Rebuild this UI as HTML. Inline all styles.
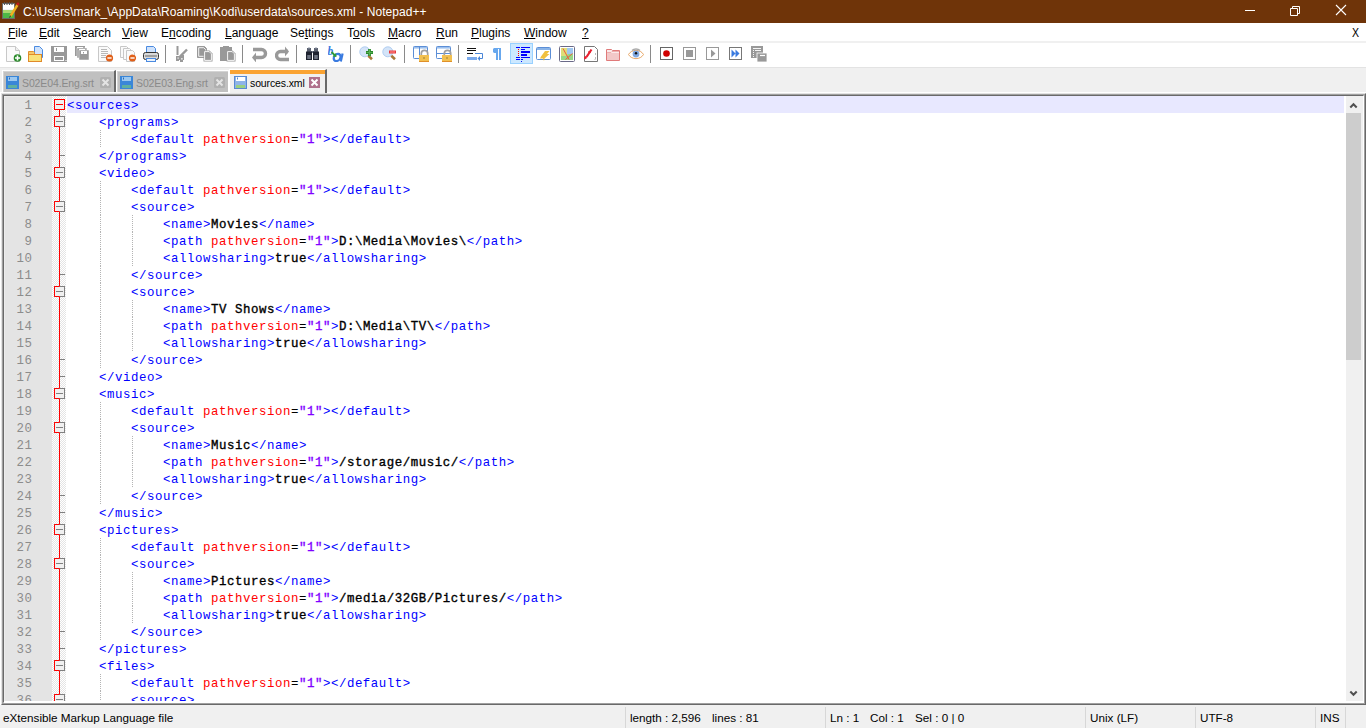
<!DOCTYPE html>
<html><head><meta charset="utf-8">
<style>
*{margin:0;padding:0;box-sizing:border-box}
html,body{width:1366px;height:728px;overflow:hidden;background:#f0f0f0;font-family:"Liberation Sans",sans-serif;position:relative}
.abs{position:absolute}
#title{left:0;top:0;width:1366px;height:23px;background:#6f3409;color:#fff;font-size:12px}
#title .t{position:absolute;left:23px;top:5px;white-space:pre;letter-spacing:0.06px}
#menu{left:0;top:23px;width:1366px;height:18px;background:#fff;font-size:12px;color:#000}
#menu span{position:absolute;top:3px;white-space:pre}
#menu u{text-decoration:underline;text-underline-offset:1px;text-decoration-thickness:1px}
#sep1{left:0;top:41px;width:1366px;height:2px;background:#f0f0f0}
#tool{left:0;top:43px;width:1366px;height:24px;background:#fff}
#tool svg{position:absolute;top:3px}
.ts{position:absolute;top:2px;width:1px;height:18px;background:#8a8a8a}
#tline{left:0;top:67px;width:1366px;height:1px;background:#e3e3e3}
.tabbg{position:absolute}
.tabt{position:absolute;font-size:10.5px;white-space:pre;line-height:12px;letter-spacing:-0.12px}
#tabwhite{position:absolute;left:0;top:92px;width:1366px;height:1px;background:#fff}
#lnm{position:absolute;left:4px;top:96px;width:48px;height:607px;background:#e4e4e4;box-shadow:inset 1px 1px 0 #ececec}
#fm{position:absolute;left:52px;top:96px;width:14px;height:607px;background-color:#fff;
 background-image:linear-gradient(45deg,#e4e4e4 25%,transparent 25%,transparent 75%,#e4e4e4 75%),linear-gradient(45deg,#e4e4e4 25%,transparent 25%,transparent 75%,#e4e4e4 75%);
 background-size:2px 2px;background-position:0 0,1px 1px}
#cl{position:absolute;left:67px;top:96px;width:1277px;height:17px;background:#e8e8ff}
#code{position:absolute;left:67px;top:98px;font-family:"Liberation Mono",monospace;font-size:12.4px;letter-spacing:0.56px;line-height:17px;white-space:pre;color:#000}
#nums{position:absolute;left:4px;top:98px;width:28.6px;font-family:"Liberation Mono",monospace;font-size:12.4px;letter-spacing:0.56px;line-height:17px;text-align:right;color:#8c8c8c}
.l,.n{height:17px}
b{font-weight:normal}
b.t{color:#0000ff}
b.a{color:#ff0000}
b.v{color:#8000ff;font-weight:normal;-webkit-text-stroke:0.35px #8000ff}
b.x{color:#000;font-weight:normal;-webkit-text-stroke:0.35px #000}
#clip{position:absolute;left:4px;top:96px;width:1359px;height:605px;overflow:hidden}
#clipin{position:absolute;left:-4px;top:-96px;width:1366px;height:728px}
#sb{position:absolute;left:1346px;top:96px;width:17px;height:606px;background:#f0f0f0}
#thumb{position:absolute;left:1346px;top:113px;width:15px;height:247px;background:#cdcdcd}
#status{left:0;top:705px;width:1366px;height:23px;background:#f0f0f0;font-size:11.7px;color:#000}
#status span{position:absolute;top:6px;white-space:pre}
.ss{position:absolute;top:2px;width:1px;height:21px;background:#d7d7d7}
</style></head><body>
<div id="title" class="abs">
<svg class="abs" style="left:1px;top:1px" width="19" height="19" viewBox="0 0 19 19">
<rect x="1.5" y="2.5" width="12" height="15" fill="#f4f4f4" stroke="#6a6a6a"/>
<path d="M3.5 1v3M6 1v3M8.5 1v3M11 1v3" stroke="#555" stroke-width="1"/>
<rect x="2" y="4" width="11" height="4" fill="#fff"/>
<rect x="2" y="9" width="11" height="8" fill="#4cb848"/>
<rect x="2" y="9" width="11" height="3" fill="#a8d870"/>
<path d="M9.5 15 L16.5 4" stroke="#f0b020" stroke-width="2.4"/>
<path d="M8.6 16.6 L9.6 14.6" stroke="#333" stroke-width="1"/>
<circle cx="17" cy="3" r="1.4" fill="#c01818"/>
</svg>
<span class="t">C:\Users\mark_\AppData\Roaming\Kodi\userdata\sources.xml - Notepad++</span>
<svg class="abs" style="left:1245px;top:10px" width="11" height="2"><rect width="10" height="1" fill="#fff"/></svg>
<svg class="abs" style="left:1288px;top:4px" width="12" height="12"><path d="M2.5 4.5h7v7h-7z M4.5 4.5v-2h7v7h-2" fill="none" stroke="#fff"/></svg>
<svg class="abs" style="left:1335px;top:4px" width="12" height="12"><path d="M1 1L11 11M11 1L1 11" stroke="#fff" stroke-width="1.1"/></svg>
</div>
<div id="menu" class="abs">
<span style="left:8px"><u>F</u>ile</span>
<span style="left:39px"><u>E</u>dit</span>
<span style="left:73px"><u>S</u>earch</span>
<span style="left:122px"><u>V</u>iew</span>
<span style="left:161px">E<u>n</u>coding</span>
<span style="left:225px"><u>L</u>anguage</span>
<span style="left:290px">Se<u>t</u>tings</span>
<span style="left:347px">T<u>o</u>ols</span>
<span style="left:388px"><u>M</u>acro</span>
<span style="left:436px"><u>R</u>un</span>
<span style="left:471px"><u>P</u>lugins</span>
<span style="left:524px"><u>W</u>indow</span>
<span style="left:582px"><u>?</u></span>
<span style="left:1352px;color:#000;transform:scaleX(0.88);transform-origin:0 0">X</span>
</div>
<div id="sep1" class="abs"></div>
<div id="tool" class="abs">
<svg style="left:6px" width="16" height="16" viewBox="0 0 16 16"><path d="M0.5 0.5h9l4 4v11h-13z" fill="#fafafa" stroke="#c8c8c8"/>
<path d="M9.5 0.5v4h4" fill="#eee" stroke="#c8c8c8"/>
<circle cx="11.5" cy="12" r="3.8" fill="#2a8a2a"/>
<path d="M11.5 9.5v5M9 12h5" stroke="#fff" stroke-width="1.6"/></svg>
<svg style="left:28px" width="16" height="16" viewBox="0 0 16 16"><path d="M6.5 0.5h5l3 3v8h-8z" fill="#cfe2fb" stroke="#4a8ae0"/>
<path d="M0.5 5.5h5l1 1h0v9h-6z" fill="#f5c86a" stroke="#e09030"/>
<rect x="0.5" y="8.5" width="13" height="7" fill="#f9e27a" stroke="#e08a2a"/></svg>
<svg style="left:51px" width="16" height="16" viewBox="0 0 16 16"><path d="M0 0h16v16h-16z" fill="#999"/>
<rect x="3" y="1" width="10" height="5" fill="#fff"/>
<rect x="5" y="2" width="1" height="3" fill="#999"/>
<rect x="3" y="10" width="10" height="5" fill="#fff"/>
<rect x="4" y="11" width="8" height="3" fill="#999"/>
<rect x="14.5" y="14" width="1" height="1" fill="#fff"/></svg>
<svg style="left:75px" width="16" height="16" viewBox="0 0 16 16"><rect x="0" y="0" width="10" height="10" fill="#999"/>
<rect x="2" y="1" width="6" height="2" fill="#fff"/>
<rect x="2" y="2" width="10" height="10" fill="#999" stroke="#fff" stroke-width="0.5"/>
<rect x="4" y="3" width="6" height="2" fill="#fff"/>
<rect x="4" y="4" width="10" height="10" fill="#999" stroke="#fff" stroke-width="0.5"/>
<rect x="6" y="5" width="6" height="3" fill="#fff"/>
<rect x="8" y="6" width="1" height="1.5" fill="#999"/></svg>
<svg style="left:98px" width="16" height="16" viewBox="0 0 16 16"><path d="M0.5 0.5h9l4 4v11h-13z" fill="#fafafa" stroke="#c8c8c8"/>
<path d="M3 3.5h6M3 5.5h7M3 7.5h7M3 9.5h5M3 11.5h5" stroke="#b8b8b8" stroke-width="1"/>
<circle cx="11.5" cy="12" r="3.6" fill="#e0601a"/>
<path d="M9.4 12h4.2" stroke="#fff" stroke-width="1.4"/></svg>
<svg style="left:120px" width="16" height="16" viewBox="0 0 16 16"><path d="M0.5 0.5h6l2 2v9h-8z" fill="#fafafa" stroke="#c8c8c8"/>
<path d="M3.5 2.5h6l2 2v9h-8z" fill="#fafafa" stroke="#c8c8c8"/>
<path d="M6.5 4.5h6l2 2v9h-8z" fill="#fafafa" stroke="#c8c8c8"/>
<circle cx="12.5" cy="12" r="3.6" fill="#e0601a"/>
<path d="M10.4 12h4.2" stroke="#fff" stroke-width="1.4"/></svg>
<svg style="left:143px" width="16" height="16" viewBox="0 0 16 16"><path d="M3.5 0.5h7l2 2v5h-9z" fill="#cfe2fb" stroke="#4a8ae0"/>
<rect x="0.5" y="6.5" width="15" height="7" rx="2" fill="#d9d9d9" stroke="#333"/>
<rect x="2" y="9" width="12" height="2" fill="#a0a0a0"/>
<rect x="3.5" y="12.5" width="9" height="3" fill="#eaf2fc" stroke="#4a8ae0"/></svg>
<svg style="left:176px" width="13" height="16" viewBox="0 0 13 16"><path d="M1.5 0v9" stroke="#999" stroke-width="2"/>
<path d="M11 3.5L4 10.5" stroke="#999" stroke-width="2.4"/>
<path d="M0 10h4v4h-1v1h-3z" fill="#999"/>
<path d="M4 9h4v5h-1v2h-3z" fill="#999"/>
<rect x="1.5" y="11.5" width="1.2" height="1.2" fill="#fff"/>
<rect x="5.3" y="12" width="1.2" height="1.6" fill="#fff"/></svg>
<svg style="left:197px" width="16" height="16" viewBox="0 0 16 16"><path d="M0.5 0.5h7l2 2v9h-9z" fill="#999" stroke="#999"/>
<path d="M1.7 1.7h5l2 2v6.6h-7z" fill="#999" stroke="#fff" stroke-width="0.9"/>
<path d="M6.5 4.5h6l3 3v8h-9z" fill="#999"/>
<path d="M7.6 5.6h4.6l2.2 2.2v6.6h-6.8z" fill="#999" stroke="#fff" stroke-width="0.9"/></svg>
<svg style="left:220px" width="16" height="16" viewBox="0 0 16 16"><path d="M0 1h3v-1h6v1h3v14h-12z" fill="#999"/>
<path d="M6.5 4.5h6l3 3v8h-9z" fill="#999"/>
<path d="M7.6 5.6h4.6l2.2 2.2v6.6h-6.8z" fill="#999" stroke="#fff" stroke-width="0.9"/></svg>
<svg style="left:252px" width="16" height="16" viewBox="0 0 16 16"><path d="M1 3.5h8.5a4 4 0 0 1 0 8h-6" fill="none" stroke="#999" stroke-width="3.4"/>
<path d="M0 11.5l4-5v10z" fill="#999"/></svg>
<svg style="left:275px" width="16" height="16" viewBox="0 0 16 16"><path d="M13 5.5h-7.5a4 4 0 0 0 0 8h8.5" fill="none" stroke="#999" stroke-width="3.4"/>
<path d="M14 5.5l-4-5v10z" fill="#999"/></svg>
<svg style="left:306px" width="16" height="16" viewBox="0 0 16 16"><rect x="1" y="2" width="4" height="4" fill="#5a6070"/>
<rect x="8" y="2" width="4" height="4" fill="#5a6070"/>
<rect x="2" y="1.5" width="2" height="1" fill="#9098a8"/>
<rect x="9" y="1.5" width="2" height="1" fill="#9098a8"/>
<rect x="4" y="5" width="5" height="2" fill="#707888"/>
<rect x="0" y="5.5" width="6" height="8.5" fill="#1e2230"/>
<rect x="7" y="5.5" width="6" height="8.5" fill="#1e2230"/>
<rect x="1.5" y="9" width="3" height="4" fill="#9aa0ae"/>
<rect x="8.5" y="9" width="3" height="4" fill="#9aa0ae"/>
<rect x="2.5" y="9" width="1" height="4" fill="#404858"/>
<rect x="9.5" y="9" width="1" height="4" fill="#404858"/></svg>
<svg style="left:328px" width="16" height="16" viewBox="0 0 16 16"><text x="-0.5" y="8.5" font-family="Liberation Serif" font-style="italic" font-weight="bold" font-size="11.5" fill="#3a7be0">b</text>
<ellipse cx="9.3" cy="11.5" rx="3.3" ry="3.6" fill="none" stroke="#3a7be0" stroke-width="2.2" transform="skewX(-12) translate(2.3 0)"/>
<path d="M14.6 7.5l-1.8 8" stroke="#3a7be0" stroke-width="2.2"/>
<path d="M3.5 6l3.5 3.5" stroke="#2e9a3a" stroke-width="1.8"/>
<path d="M8.5 11l-4-0.5 3.5-3.5z" fill="#2e9a3a"/></svg>
<svg style="left:359px" width="16" height="16" viewBox="0 0 16 16"><circle cx="5.8" cy="5.8" r="5" fill="#d4e4f8" stroke="#b0cdf0"/>
<path d="M9.3 9.8l3.7 3.4" stroke="#a87838" stroke-width="2.6"/>
<path d="M10.5 3v7M7 6.5h7" stroke="#2a8a2a" stroke-width="2.8"/>
<path d="M10.5 3.5v6M7.5 6.5h6" stroke="#58b058" stroke-width="1.2"/></svg>
<svg style="left:382px" width="16" height="16" viewBox="0 0 16 16"><circle cx="5.8" cy="5.8" r="5" fill="#d4e4f8" stroke="#b0cdf0"/>
<path d="M9.3 9.8l3.7 3.4" stroke="#a87838" stroke-width="2.6"/>
<rect x="7" y="4.5" width="7" height="3" fill="#e83838"/>
<rect x="8" y="5.5" width="5" height="1" fill="#ff9090"/></svg>
<svg style="left:413px" width="16" height="16" viewBox="0 0 16 16"><rect x="0.5" y="0.5" width="14" height="12" rx="0.8" fill="#fff" stroke="#5b8ed6"/>
<rect x="1" y="1" width="13" height="1.6" fill="#9cc0ee"/>
<path d="M6.5 1v12" stroke="#5b8ed6"/>
<path d="M8.3 9.5v-2a3.2 3.2 0 0 1 6.4 0v2" fill="none" stroke="#a0a0a0" stroke-width="1.7"/>
<rect x="6" y="9" width="10" height="7" fill="#f2c050"/>
<rect x="6" y="15" width="10" height="1" fill="#e0902a"/>
<rect x="10" y="11" width="2" height="2" fill="#c8a040"/></svg>
<svg style="left:436px" width="16" height="16" viewBox="0 0 16 16"><rect x="0.5" y="0.5" width="14" height="12" rx="0.8" fill="#fff" stroke="#5b8ed6"/>
<rect x="1" y="1" width="13" height="1.6" fill="#9cc0ee"/>
<path d="M1 7.5h13" stroke="#5b8ed6"/>
<path d="M8.3 9.5v-2a3.2 3.2 0 0 1 6.4 0v2" fill="none" stroke="#a0a0a0" stroke-width="1.7"/>
<rect x="6" y="9" width="10" height="7" fill="#f2c050"/>
<rect x="6" y="15" width="10" height="1" fill="#e0902a"/>
<rect x="10" y="11" width="2" height="2" fill="#c8a040"/></svg>
<svg style="left:467px" width="16" height="16" viewBox="0 0 16 16"><path d="M0 2.5h9M0 4.5h9M0 7.5h6" stroke="#111" stroke-width="1"/>
<path d="M8 7.5h7.5v5h-3" fill="none" stroke="#4a86d8" stroke-width="1"/>
<path d="M10.5 12.5l2.5-2.5v5z" fill="#4a86d8"/>
<rect x="0" y="11" width="10" height="3" fill="#7aaaec"/></svg>
<svg style="left:492px" width="10" height="16" viewBox="0 0 10 16"><path d="M2 2h7v12h-2v-11h-1v11h-2v-7h-2l-1-1v-3z" fill="#68a8ee"/></svg>
<svg style="left:536px" width="16" height="16" viewBox="0 0 16 16"><rect x="0.5" y="1.5" width="14" height="12" rx="1" fill="#fff" stroke="#5b8ed6"/>
<rect x="1" y="2" width="13" height="2" fill="#8ab4e8"/>
<path d="M5 10.5l4-5.5h4.5l-2.5 3h2.5l-5 4.5 -0.5 2.5 -1-2.5h-3z" fill="#f0c040"/></svg>
<svg style="left:559px" width="16" height="16" viewBox="0 0 16 16"><rect x="0.5" y="0.5" width="15" height="15" rx="1" fill="#fff" stroke="#6a6a88"/>
<path d="M2 2h12v12h-12z" fill="#dede78"/>
<path d="M8 2h6v6h-6z" fill="#a0c8f0"/>
<path d="M2 10h5l2 -2h5v6h-12z" fill="#98d888"/>
<path d="M4 2.5l6 11M6.5 13.5l7-6" stroke="#f05a3a" stroke-width="1"/></svg>
<svg style="left:584px" width="16" height="16" viewBox="0 0 16 16"><path d="M0.5 0.5h10l3 3v12h-13z" fill="#fff" stroke="#777"/>
<path d="M7.5 3.5l-5 7.5" stroke="#e82030" stroke-width="2.2"/>
<path d="M0 12.5l2.5-1.5" stroke="#e82030" stroke-width="2.6"/>
<path d="M4 6h3" stroke="#e82030" stroke-width="1.2"/>
<path d="M11.5 7v2M11.5 11v2M10.5 13.5h1" stroke="#aaa" stroke-width="0.8"/></svg>
<svg style="left:606px" width="16" height="16" viewBox="0 0 16 16"><path d="M0.5 3.5h5l1 1h7v10h-13z" fill="#fbeaea" stroke="#e07a7a"/>
<path d="M1 7h12v7h-12z" fill="#f2c8c8"/>
<path d="M1 6.5h4l1-1h7" fill="none" stroke="#e8a0a0" stroke-width="0.8"/></svg>
<svg style="left:628px" width="16" height="16" viewBox="0 0 16 16"><path d="M0.5 8.5c3-5.5 12-5.5 15 0c-3 5.5-12 5.5-15 0z" fill="#fff" stroke="#e8a868"/>
<path d="M4 4.5c2-2 6-2 8 0" fill="none" stroke="#aaa" stroke-width="1.4"/>
<circle cx="8" cy="8" r="3.4" fill="#80a8e0"/>
<circle cx="8" cy="7.2" r="1.2" fill="#111"/></svg>
<svg style="left:660px" width="13" height="16" viewBox="0 0 13 16"><rect x="0.5" y="1.5" width="12" height="12" fill="#fff" stroke="#666"/>
<circle cx="6.5" cy="7.5" r="3.3" fill="#d00000"/></svg>
<svg style="left:683px" width="13" height="16" viewBox="0 0 13 16"><rect x="0.5" y="1.5" width="12" height="12" fill="#fff" stroke="#999"/>
<rect x="3" y="4" width="7" height="7" fill="#999"/></svg>
<svg style="left:706px" width="13" height="16" viewBox="0 0 13 16"><rect x="0.5" y="1.5" width="12" height="12" fill="#fff" stroke="#999"/>
<path d="M5 3.5l4.5 4-4.5 4z" fill="#999"/></svg>
<svg style="left:729px" width="13" height="16" viewBox="0 0 13 16"><rect x="0.5" y="1.5" width="12" height="12" fill="#fff" stroke="#777"/>
<path d="M2.5 3.5l4 4-4 4zM6.5 3.5l4 4-4 4z" fill="#3a7be0"/></svg>
<svg style="left:751px" width="16" height="16" viewBox="0 0 16 16"><rect x="0" y="0" width="12" height="12" fill="#999"/>
<path d="M2 2.5h8M2 4.5h1M4 4.5h6M2 6.5h1M2 8.5h1M2 10.5h1" stroke="#fff" stroke-width="0.9"/>
<rect x="6" y="7" width="10" height="9" fill="#999" stroke="#fff" stroke-width="0.8"/>
<path d="M9 9.5h5" stroke="#fff" stroke-width="1.2"/></svg>
<div class="ts" style="left:165px"></div>
<div class="ts" style="left:242px"></div>
<div class="ts" style="left:296px"></div>
<div class="ts" style="left:350px"></div>
<div class="ts" style="left:404px"></div>
<div class="ts" style="left:458px"></div>
<div class="ts" style="left:650px"></div>
<div style="position:absolute;left:510px;top:0px;width:23px;height:21px;background:#cce8ff;border:1px solid #99d1ff"></div>
<svg style="left:516px" width="16" height="16" viewBox="0 0 16 16">
<path d="M0 1.5h4M5 1.5h9M5 3.5h4M0 11.5h4M5 11.5h9M0 13.5h4M5 13.5h2" stroke="#0000ff" stroke-width="1.2"/>
<path d="M5 6h9M5 9h6" stroke="#0000ff" stroke-width="2"/>
<rect x="5" y="15" width="1" height="1" fill="#0000ff"/>
<rect x="2" y="3" width="1" height="1" fill="#ff0000"/><rect x="2" y="5" width="1" height="1" fill="#ff0000"/><rect x="2" y="7" width="1" height="1" fill="#ff0000"/><rect x="2" y="9" width="1" height="1" fill="#ff0000"/>
</svg>
</div>
<div id="tline" class="abs"></div>
<div id="tabwhite"></div>
<div style="position:absolute;left:0;top:92px;width:1px;height:613px;background:#fff"></div>
<div class="tabbg" style="left:2px;top:70px;width:114px;height:22px;background:#c0c0c0;border-style:solid;border-color:#fff #696969 #c0c0c0 #fff;border-width:1px 2px 0 1px;box-shadow:inset 1px 1px 0 #d4d4d4"></div>
<div class="tabbg" style="left:116px;top:70px;width:113px;height:22px;background:#c0c0c0;border-style:solid;border-color:#fff #fff #c0c0c0 #fff;border-width:1px 1px 0 1px;box-shadow:inset 1px 1px 0 #d4d4d4"></div>
<div class="tabbg" style="left:229px;top:69px;width:98px;height:24px;background:#f0f0f0;border-style:solid;border-color:#fff #696969 #f0f0f0 #fff;border-width:1px 2px 0 1px"></div>
<div class="tabbg" style="left:230px;top:70px;width:95px;height:4px;background:#faa332"></div>
<svg class="abs" style="left:6px;top:76px" width="13" height="13"><rect x="0" y="0" width="13" height="13" fill="#3a86d8"/><rect x="2" y="1" width="9" height="4" fill="#9cc8f0"/><rect x="3" y="1.5" width="1" height="2" fill="#2a6ab8"/><rect x="2" y="9" width="9" height="3" fill="#5fb0a0"/></svg><span class="tabt" style="left:22px;top:77px;color:#8a8a8a">S02E04.Eng.srt</span>
<svg class="abs" style="left:100px;top:77px" width="11" height="11"><rect width="11" height="11" rx="1.5" fill="#b0b0b0"/><path d="M2.5 2.5L8.5 8.5M8.5 2.5L2.5 8.5" stroke="#e4e4e4" stroke-width="2"/></svg>
<svg class="abs" style="left:120px;top:76px" width="13" height="13"><rect x="0" y="0" width="13" height="13" fill="#3a86d8"/><rect x="2" y="1" width="9" height="4" fill="#9cc8f0"/><rect x="3" y="1.5" width="1" height="2" fill="#2a6ab8"/><rect x="2" y="9" width="9" height="3" fill="#5fb0a0"/></svg><span class="tabt" style="left:136px;top:77px;color:#8a8a8a">S02E03.Eng.srt</span>
<svg class="abs" style="left:214px;top:77px" width="11" height="11"><rect width="11" height="11" rx="1.5" fill="#b0b0b0"/><path d="M2.5 2.5L8.5 8.5M8.5 2.5L2.5 8.5" stroke="#e4e4e4" stroke-width="2"/></svg>
<svg class="abs" style="left:234px;top:76px" width="13" height="13"><rect x="0.5" y="0.5" width="12" height="12" fill="#8fb4e8" stroke="#5a8ad0"/><rect x="2" y="1" width="9" height="4" fill="#fff"/><rect x="3" y="1.5" width="1" height="2" fill="#5a8ad0"/><rect x="2" y="9" width="9" height="3" fill="#9ad080"/></svg><span class="tabt" style="left:250px;top:77px;color:#000">sources.xml</span>
<svg class="abs" style="left:309px;top:77px" width="11" height="11"><rect width="11" height="11" fill="#b0708c"/><path d="M2.5 2.5L8.5 8.5M8.5 2.5L2.5 8.5" stroke="#fff" stroke-width="2"/></svg>
<div style="position:absolute;left:1px;top:93px;width:1365px;height:612px;border-style:solid;border-width:1px;border-color:#e3e3e3 #696969 #696969 #e3e3e3">
<div style="width:100%;height:100%;border:1px solid #a0a0a0">
<div style="width:100%;height:100%;border-style:solid;border-width:1px;border-color:#696969 #fff #fff #696969;background:#fff"></div></div></div>
<div id="clip"><div id="clipin">
<div id="lnm"></div>
<div id="fm"></div>
<div id="cl"></div>
<div id="nums"><div class=n>1</div><div class=n>2</div><div class=n>3</div><div class=n>4</div><div class=n>5</div><div class=n>6</div><div class=n>7</div><div class=n>8</div><div class=n>9</div><div class=n>10</div><div class=n>11</div><div class=n>12</div><div class=n>13</div><div class=n>14</div><div class=n>15</div><div class=n>16</div><div class=n>17</div><div class=n>18</div><div class=n>19</div><div class=n>20</div><div class=n>21</div><div class=n>22</div><div class=n>23</div><div class=n>24</div><div class=n>25</div><div class=n>26</div><div class=n>27</div><div class=n>28</div><div class=n>29</div><div class=n>30</div><div class=n>31</div><div class=n>32</div><div class=n>33</div><div class=n>34</div><div class=n>35</div><div class=n>36</div></div>
<svg class=guides width="1366" height="728" style="position:absolute;left:0;top:0"><g stroke="#b4b4b4" stroke-width="1" stroke-dasharray="1 1"><line x1="100.5" y1="130" x2="100.5" y2="147"/><line x1="100.5" y1="181" x2="100.5" y2="198"/><line x1="100.5" y1="198" x2="100.5" y2="215"/><line x1="100.5" y1="215" x2="100.5" y2="232"/><line x1="132.5" y1="215" x2="132.5" y2="232"/><line x1="100.5" y1="232" x2="100.5" y2="249"/><line x1="132.5" y1="232" x2="132.5" y2="249"/><line x1="100.5" y1="249" x2="100.5" y2="266"/><line x1="132.5" y1="249" x2="132.5" y2="266"/><line x1="100.5" y1="266" x2="100.5" y2="283"/><line x1="100.5" y1="283" x2="100.5" y2="300"/><line x1="100.5" y1="300" x2="100.5" y2="317"/><line x1="132.5" y1="300" x2="132.5" y2="317"/><line x1="100.5" y1="317" x2="100.5" y2="334"/><line x1="132.5" y1="317" x2="132.5" y2="334"/><line x1="100.5" y1="334" x2="100.5" y2="351"/><line x1="132.5" y1="334" x2="132.5" y2="351"/><line x1="100.5" y1="351" x2="100.5" y2="368"/><line x1="100.5" y1="402" x2="100.5" y2="419"/><line x1="100.5" y1="419" x2="100.5" y2="436"/><line x1="100.5" y1="436" x2="100.5" y2="453"/><line x1="132.5" y1="436" x2="132.5" y2="453"/><line x1="100.5" y1="453" x2="100.5" y2="470"/><line x1="132.5" y1="453" x2="132.5" y2="470"/><line x1="100.5" y1="470" x2="100.5" y2="487"/><line x1="132.5" y1="470" x2="132.5" y2="487"/><line x1="100.5" y1="487" x2="100.5" y2="504"/><line x1="100.5" y1="538" x2="100.5" y2="555"/><line x1="100.5" y1="555" x2="100.5" y2="572"/><line x1="100.5" y1="572" x2="100.5" y2="589"/><line x1="132.5" y1="572" x2="132.5" y2="589"/><line x1="100.5" y1="589" x2="100.5" y2="606"/><line x1="132.5" y1="589" x2="132.5" y2="606"/><line x1="100.5" y1="606" x2="100.5" y2="623"/><line x1="132.5" y1="606" x2="132.5" y2="623"/><line x1="100.5" y1="623" x2="100.5" y2="640"/><line x1="100.5" y1="674" x2="100.5" y2="691"/><line x1="100.5" y1="691" x2="100.5" y2="708"/></g></svg>
<svg width="1366" height="728" style="position:absolute;left:0;top:0"><line x1="59.5" y1="110" x2="59.5" y2="705" stroke="#ff0000"/><rect x="54.5" y="99.5" width="10" height="10" fill="#f0f0f0" stroke="#ff0000"/><line x1="56" y1="104.5" x2="63" y2="104.5" stroke="#ff0000"/><rect x="54.5" y="116.5" width="10" height="10" fill="#f0f0f0" stroke="#808080"/><path d="M59.5 116.5 H54.5 V126.5 H59.5" fill="none" stroke="#ff0000"/><line x1="56" y1="121.5" x2="63" y2="121.5" stroke="#808080"/><rect x="54.5" y="167.5" width="10" height="10" fill="#f0f0f0" stroke="#808080"/><path d="M59.5 167.5 H54.5 V177.5 H59.5" fill="none" stroke="#ff0000"/><line x1="56" y1="172.5" x2="63" y2="172.5" stroke="#808080"/><rect x="54.5" y="201.5" width="10" height="10" fill="#f0f0f0" stroke="#808080"/><path d="M59.5 201.5 H54.5 V211.5 H59.5" fill="none" stroke="#ff0000"/><line x1="56" y1="206.5" x2="63" y2="206.5" stroke="#808080"/><rect x="54.5" y="286.5" width="10" height="10" fill="#f0f0f0" stroke="#808080"/><path d="M59.5 286.5 H54.5 V296.5 H59.5" fill="none" stroke="#ff0000"/><line x1="56" y1="291.5" x2="63" y2="291.5" stroke="#808080"/><rect x="54.5" y="388.5" width="10" height="10" fill="#f0f0f0" stroke="#808080"/><path d="M59.5 388.5 H54.5 V398.5 H59.5" fill="none" stroke="#ff0000"/><line x1="56" y1="393.5" x2="63" y2="393.5" stroke="#808080"/><rect x="54.5" y="422.5" width="10" height="10" fill="#f0f0f0" stroke="#808080"/><path d="M59.5 422.5 H54.5 V432.5 H59.5" fill="none" stroke="#ff0000"/><line x1="56" y1="427.5" x2="63" y2="427.5" stroke="#808080"/><rect x="54.5" y="524.5" width="10" height="10" fill="#f0f0f0" stroke="#808080"/><path d="M59.5 524.5 H54.5 V534.5 H59.5" fill="none" stroke="#ff0000"/><line x1="56" y1="529.5" x2="63" y2="529.5" stroke="#808080"/><rect x="54.5" y="558.5" width="10" height="10" fill="#f0f0f0" stroke="#808080"/><path d="M59.5 558.5 H54.5 V568.5 H59.5" fill="none" stroke="#ff0000"/><line x1="56" y1="563.5" x2="63" y2="563.5" stroke="#808080"/><rect x="54.5" y="660.5" width="10" height="10" fill="#f0f0f0" stroke="#808080"/><path d="M59.5 660.5 H54.5 V670.5 H59.5" fill="none" stroke="#ff0000"/><line x1="56" y1="665.5" x2="63" y2="665.5" stroke="#808080"/><rect x="54.5" y="694.5" width="10" height="10" fill="#f0f0f0" stroke="#808080"/><path d="M59.5 694.5 H54.5 V704.5 H59.5" fill="none" stroke="#ff0000"/><line x1="56" y1="699.5" x2="63" y2="699.5" stroke="#808080"/><line x1="60" y1="155.5" x2="65" y2="155.5" stroke="#808080"/><line x1="60" y1="274.5" x2="65" y2="274.5" stroke="#808080"/><line x1="60" y1="359.5" x2="65" y2="359.5" stroke="#808080"/><line x1="60" y1="376.5" x2="65" y2="376.5" stroke="#808080"/><line x1="60" y1="495.5" x2="65" y2="495.5" stroke="#808080"/><line x1="60" y1="512.5" x2="65" y2="512.5" stroke="#808080"/><line x1="60" y1="631.5" x2="65" y2="631.5" stroke="#808080"/><line x1="60" y1="648.5" x2="65" y2="648.5" stroke="#808080"/></svg>
<div id="code"><div class=l><b class=t>&lt;sources&gt;</b></div><div class=l>    <b class=t>&lt;programs&gt;</b></div><div class=l>        <b class=t>&lt;default</b> <b class=a>pathversion</b>=<b class=v>&quot;1&quot;</b><b class=t>&gt;</b><b class=t>&lt;/default&gt;</b></div><div class=l>    <b class=t>&lt;/programs&gt;</b></div><div class=l>    <b class=t>&lt;video&gt;</b></div><div class=l>        <b class=t>&lt;default</b> <b class=a>pathversion</b>=<b class=v>&quot;1&quot;</b><b class=t>&gt;</b><b class=t>&lt;/default&gt;</b></div><div class=l>        <b class=t>&lt;source&gt;</b></div><div class=l>            <b class=t>&lt;name&gt;</b><b class=x>Movies</b><b class=t>&lt;/name&gt;</b></div><div class=l>            <b class=t>&lt;path</b> <b class=a>pathversion</b>=<b class=v>&quot;1&quot;</b><b class=t>&gt;</b><b class=x>D:\Media\Movies\</b><b class=t>&lt;/path&gt;</b></div><div class=l>            <b class=t>&lt;allowsharing&gt;</b><b class=x>true</b><b class=t>&lt;/allowsharing&gt;</b></div><div class=l>        <b class=t>&lt;/source&gt;</b></div><div class=l>        <b class=t>&lt;source&gt;</b></div><div class=l>            <b class=t>&lt;name&gt;</b><b class=x>TV Shows</b><b class=t>&lt;/name&gt;</b></div><div class=l>            <b class=t>&lt;path</b> <b class=a>pathversion</b>=<b class=v>&quot;1&quot;</b><b class=t>&gt;</b><b class=x>D:\Media\TV\</b><b class=t>&lt;/path&gt;</b></div><div class=l>            <b class=t>&lt;allowsharing&gt;</b><b class=x>true</b><b class=t>&lt;/allowsharing&gt;</b></div><div class=l>        <b class=t>&lt;/source&gt;</b></div><div class=l>    <b class=t>&lt;/video&gt;</b></div><div class=l>    <b class=t>&lt;music&gt;</b></div><div class=l>        <b class=t>&lt;default</b> <b class=a>pathversion</b>=<b class=v>&quot;1&quot;</b><b class=t>&gt;</b><b class=t>&lt;/default&gt;</b></div><div class=l>        <b class=t>&lt;source&gt;</b></div><div class=l>            <b class=t>&lt;name&gt;</b><b class=x>Music</b><b class=t>&lt;/name&gt;</b></div><div class=l>            <b class=t>&lt;path</b> <b class=a>pathversion</b>=<b class=v>&quot;1&quot;</b><b class=t>&gt;</b><b class=x>/storage/music/</b><b class=t>&lt;/path&gt;</b></div><div class=l>            <b class=t>&lt;allowsharing&gt;</b><b class=x>true</b><b class=t>&lt;/allowsharing&gt;</b></div><div class=l>        <b class=t>&lt;/source&gt;</b></div><div class=l>    <b class=t>&lt;/music&gt;</b></div><div class=l>    <b class=t>&lt;pictures&gt;</b></div><div class=l>        <b class=t>&lt;default</b> <b class=a>pathversion</b>=<b class=v>&quot;1&quot;</b><b class=t>&gt;</b><b class=t>&lt;/default&gt;</b></div><div class=l>        <b class=t>&lt;source&gt;</b></div><div class=l>            <b class=t>&lt;name&gt;</b><b class=x>Pictures</b><b class=t>&lt;/name&gt;</b></div><div class=l>            <b class=t>&lt;path</b> <b class=a>pathversion</b>=<b class=v>&quot;1&quot;</b><b class=t>&gt;</b><b class=x>/media/32GB/Pictures/</b><b class=t>&lt;/path&gt;</b></div><div class=l>            <b class=t>&lt;allowsharing&gt;</b><b class=x>true</b><b class=t>&lt;/allowsharing&gt;</b></div><div class=l>        <b class=t>&lt;/source&gt;</b></div><div class=l>    <b class=t>&lt;/pictures&gt;</b></div><div class=l>    <b class=t>&lt;files&gt;</b></div><div class=l>        <b class=t>&lt;default</b> <b class=a>pathversion</b>=<b class=v>&quot;1&quot;</b><b class=t>&gt;</b><b class=t>&lt;/default&gt;</b></div><div class=l>        <b class=t>&lt;source&gt;</b></div></div>
<div id="sb"></div>
<div id="thumb"></div>
<svg class="abs" style="left:1349px;top:101px" width="10" height="8"><path d="M1.3 6.5L4.5 3.2L7.7 6.5" fill="none" stroke="#505050" stroke-width="2"/></svg>
<svg class="abs" style="left:1349px;top:690px" width="10" height="8"><path d="M1.3 1.5L4.5 4.8L7.7 1.5" fill="none" stroke="#505050" stroke-width="2"/></svg>
</div></div>
<div id="status" class="abs">
<span style="left:3px">eXtensible Markup Language file</span>
<div class="ss" style="left:625px"></div>
<span style="left:630px">length : 2,596</span><span style="left:712px">lines : 81</span>
<div class="ss" style="left:825px"></div>
<span style="left:830px">Ln : 1</span><span style="left:870px">Col : 1</span><span style="left:915px">Sel : 0 | 0</span>
<div class="ss" style="left:1085px"></div>
<span style="left:1090px">Unix (LF)</span>
<div class="ss" style="left:1195px"></div>
<span style="left:1200px">UTF-8</span>
<div class="ss" style="left:1315px"></div>
<span style="left:1320px">INS</span>
<div class="ss" style="left:1345px"></div>
</div>
</body></html>
